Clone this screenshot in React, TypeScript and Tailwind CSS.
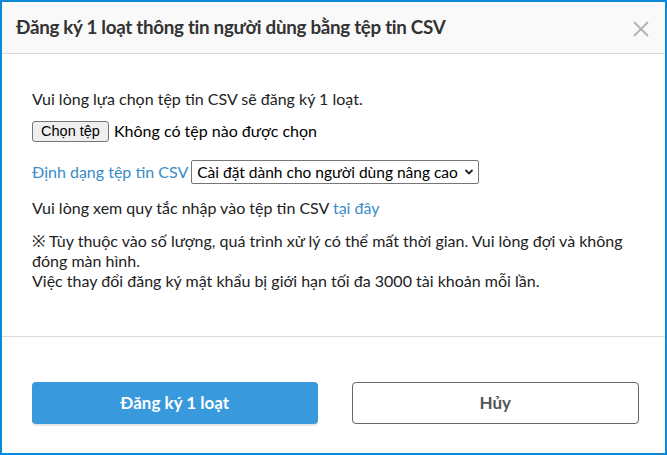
import React from "react";

export default function App() {
  const font = { fontFamily: '"Source Sans Pro", Lato, "Noto Sans", sans-serif' };
  return (
    <div
      className="w-[667px] h-[455px] border-2 border-[#0b88d8] bg-white flex flex-col text-[#222]"
      style={font}
    >
      <div className="h-[52px] shrink-0 bg-[#f9f9f9] border-b border-[#dcdcdc] flex items-center justify-between pl-[14px] pr-[16px]">
        <div className="text-[18.8px] font-bold text-[#333] tracking-[-0.3px]">
          Đăng ký 1 loạt thông tin người dùng bằng tệp tin CSV
        </div>
        <svg width="16" height="16" viewBox="0 0 16 16" className="mt-[2px]">
          <path d="M1 1 L15 15 M15 1 L1 15" stroke="#b3b3b3" strokeWidth="1.8" />
        </svg>
      </div>
      <div className="h-[283px] shrink-0 border-b border-[#dcdcdc] pt-[35px] pl-[30px] pr-[26px] text-[16px] leading-[20px]">
        <p>Vui lòng lựa chọn tệp tin CSV sẽ đăng ký 1 loạt.</p>
        <div className="mt-[12px] flex items-center h-[20px]">
          <span
            className="h-[21px] w-[77px] justify-center flex items-center border border-[#767676] rounded-[3px] bg-[#efefef] text-[14.5px] text-black"
            style={{ fontFamily: '"Liberation Sans", Arial, sans-serif' }}
          >
            Chọn tệp
          </span>
          <span className="ml-[5px] text-black">Không có tệp nào được chọn</span>
        </div>
        <div className="mt-[19px] flex items-center h-[24px]">
          <span className="text-[#3a8cc9]">Định dạng tệp tin CSV</span>
          <span className="ml-[3px] h-[24px] w-[288px] border border-[#767676] rounded-[2px] flex items-center justify-between pl-[5px] pr-[4px] text-black text-[15.5px]">
            <span>Cài đặt dành cho người dùng nâng cao</span>
            <svg width="10" height="8" viewBox="0 0 10 8">
              <path d="M1.5 2 L5 5.5 L8.5 2" stroke="#222" strokeWidth="1.8" fill="none" />
            </svg>
          </span>
        </div>
        <p className="mt-[14px]">
          Vui lòng xem quy tắc nhập vào tệp tin CSV <span className="text-[#3a8cc9]">tại đây</span>
        </p>
        <p className="mt-[13px]">
          ※ Tùy thuộc vào số lượng, quá trình xử lý có thể mất thời gian. Vui lòng đợi và không
          <br />
          đóng màn hình.
          <br />
          Việc thay đổi đăng ký mật khẩu bị giới hạn tối đa 3000 tài khoản mỗi lần.
        </p>
      </div>
      <div className="flex-1 flex items-start gap-[34px] pt-[45px] pl-[30px] pr-[26px]">
        <button className="flex-1 h-[42px] rounded-[4px] bg-[#3899dc] text-white text-[17px] font-bold shadow-[0_2px_0_#e6e6e6]">
          Đăng ký 1 loạt
        </button>
        <button className="flex-1 h-[42px] rounded-[4px] border border-[#666] bg-white text-[#555] text-[17px] font-bold">
          Hủy
        </button>
      </div>
    </div>
  );
}
